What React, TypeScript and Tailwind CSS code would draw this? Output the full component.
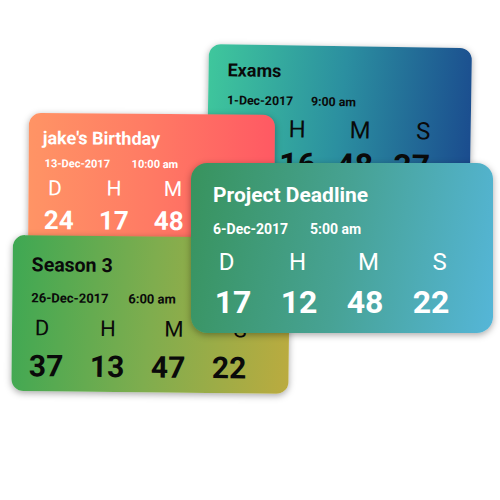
type CardCfg = {
  title: string;
  date: string;
  time: string;
  labels: string[];
  nums: string[];
  box: string;
  pad: string;
  title_c: string;
  date_c: string;
  dateW: string;
  labRow: string;
  labCell: string;
  numRow: string;
  numCell: string;
};

const cards: CardCfg[] = [
  {
    title: "Exams",
    date: "1-Dec-2017",
    time: "9:00 am",
    labels: ["D", "H", "M", "S"],
    nums: ["17", "16", "48", "37"],
    box: "left-[209px] top-[44px] w-[263px] h-[165px] rounded-[12px] origin-top-left rotate-[0.9deg] bg-[linear-gradient(95deg,#3fc79c,#2b8fa0_50%,#1a4a8e)] text-[#0a0a0a]",
    pad: "pt-[17px]",
    title_c: "pl-[19px] text-[18px]",
    date_c: "pl-[19px] mt-[15px] text-[12.3px]",
    dateW: "w-[84px]",
    labRow: "mt-[10px] -ml-[5px] text-[24px]",
    labCell: "w-[63px]",
    numRow: "mt-[7px] pl-[5px] text-[32px]",
    numCell: "w-[57px]",
  },
  {
    title: "jake's Birthday",
    date: "13-Dec-2017",
    time: "10:00 am",
    labels: ["D", "H", "M", "S"],
    nums: ["24", "17", "48", "22"],
    box: "left-[29px] top-[113px] w-[246px] h-[150px] rounded-[12px] origin-top-left rotate-[0.4deg] bg-[linear-gradient(90deg,#ff9465,#ff7a64_50%,#ff5963)] text-white",
    pad: "pt-[16px]",
    title_c: "pl-[14px] text-[18px]",
    date_c: "pl-[16px] mt-[11px] text-[11px]",
    dateW: "w-[87px]",
    labRow: "mt-[9px] -ml-[3px] text-[21px]",
    labCell: "w-[59px]",
    numRow: "mt-[8px] pl-[3px] text-[26px]",
    numCell: "w-[55px]",
  },
  {
    title: "Season 3",
    date: "26-Dec-2017",
    time: "6:00 am",
    labels: ["D", "H", "M", "S"],
    nums: ["37", "13", "47", "22"],
    box: "left-[13px] top-[235px] w-[277px] h-[156px] rounded-[12px] origin-top-left rotate-[0.6deg] bg-[linear-gradient(95deg,#3ea853,#7fad4e_50%,#bbab3f)] text-[#0a0a0a]",
    pad: "pt-[20px]",
    title_c: "pl-[19px] text-[19.5px]",
    date_c: "pl-[19px] mt-[16.5px] text-[13px]",
    dateW: "w-[97px]",
    labRow: "mt-[12.5px] -ml-[3px] text-[22px]",
    labCell: "w-[66px]",
    numRow: "mt-[12px] pl-[4px] text-[30px]",
    numCell: "w-[61px]",
  },
  {
    title: "Project Deadline",
    date: "6-Dec-2017",
    time: "5:00 am",
    labels: ["D", "H", "M", "S"],
    nums: ["17", "12", "48", "22"],
    box: "left-[191px] top-[163px] w-[302px] h-[170px] rounded-[16px] bg-[linear-gradient(100deg,#38935d,#47a294_50%,#55b6d8)] text-white",
    pad: "pt-[22px]",
    title_c: "pl-[22px] text-[21px]",
    date_c: "pl-[22px] mt-[16px] text-[14px]",
    dateW: "w-[97px]",
    labRow: "mt-[14px] text-[24px]",
    labCell: "w-[71px]",
    numRow: "mt-[12px] pl-[9px] text-[32px]",
    numCell: "w-[66px]",
  },
];

function Card({ c }: { c: CardCfg }) {
  return (
    <div
      className={`absolute overflow-hidden shadow-[0_2px_7px_rgba(0,0,0,0.35)] ${c.box} ${c.pad}`}
    >
      <div className={`leading-none font-bold ${c.title_c}`}>{c.title}</div>
      <div className={`flex leading-none font-bold ${c.date_c}`}>
        <span className={c.dateW}>{c.date}</span>
        <span>{c.time}</span>
      </div>
      <div className={`flex leading-none font-normal ${c.labRow}`}>
        {c.labels.map((l) => (
          <span key={l} className={`text-center ${c.labCell}`}>
            {l}
          </span>
        ))}
      </div>
      <div className={`flex leading-none font-bold ${c.numRow}`}>
        {c.nums.map((n, i) => (
          <span key={i} className={`text-center ${c.numCell}`}>
            {n}
          </span>
        ))}
      </div>
    </div>
  );
}

export default function App() {
  return (
    <div className="relative w-[500px] h-[500px] bg-white overflow-hidden [font-family:Roboto,sans-serif]">
      {cards.map((c) => (
        <Card key={c.title} c={c} />
      ))}
    </div>
  );
}
